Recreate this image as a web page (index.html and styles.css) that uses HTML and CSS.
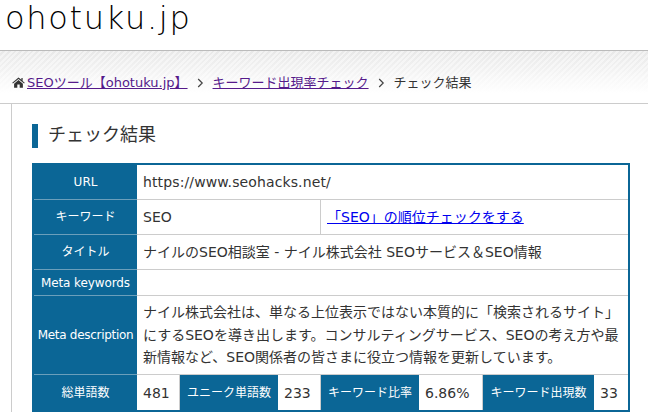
FILE: index.html
```html
<!DOCTYPE html>
<html lang="ja">
<head>
<meta charset="utf-8">
<title>チェック結果</title>
<link rel="stylesheet" href="styles.css">
</head>
<body>
<header class="site-header"><div class="logo">ohotuku.jp</div></header>
<nav class="crumbs">
  <svg class="home" viewBox="0 0 14 12" width="13" height="11"><path d="M7 0.6 0.2 6.2l.7.9L7 2.2l6.1 4.9.7-.9-2.3-1.9V1.2H10.2v1.9zM2.2 7.3V11.6H5.7V8.2H8.3V11.6H11.8V7.3L7 3.4z" fill="#333"/></svg>
  <a href="#" class="crumb-link">SEOツール【ohotuku.jp】</a>
  <svg class="sep" viewBox="0 0 7 10" width="7" height="10"><path d="M1.2 1 5.2 5 1.2 9" fill="none" stroke="#444" stroke-width="1.2"/></svg>
  <a href="#" class="crumb-link">キーワード出現率チェック</a>
  <svg class="sep" viewBox="0 0 7 10" width="7" height="10"><path d="M1.2 1 5.2 5 1.2 9" fill="none" stroke="#444" stroke-width="1.2"/></svg>
  <span>チェック結果</span>
</nav>
<main class="card">
  <h1 class="title">チェック結果</h1>
  <table class="result">
    <colgroup>
      <col class="c1"><col class="c2"><col class="c3"><col class="c4"><col class="c5"><col class="c6"><col class="c7"><col class="c8">
    </colgroup>
    <tr class="r34"><th>URL</th><td colspan="7" class="url">https://www.seohacks.net/</td></tr>
    <tr class="r34"><th>キーワード</th><td colspan="3">SEO</td><td colspan="4"><a href="#" class="link">「SEO」の順位チェックをする</a></td></tr>
    <tr class="r34"><th>タイトル</th><td colspan="7">ナイルのSEO相談室 - ナイル株式会社 SEOサービス＆SEO情報</td></tr>
    <tr class="r25"><th class="tight1">Meta keywords</th><td colspan="7"></td></tr>
    <tr class="r78"><th class="tight2">Meta description</th><td colspan="7" class="desc">ナイル株式会社は、単なる上位表示ではない本質的に「検索されるサイト」にするSEOを導き出します。コンサルティングサービス、SEOの考え方や最新情報など、SEO関係者の皆さまに役立つ情報を更新しています。</td></tr>
    <tr class="r34"><th>総単語数</th><td>481</td><th>ユニーク単語数</th><td>233</td><th>キーワード比率</th><td>6.86%</td><th>キーワード出現数</th><td>33</td></tr>
  </table>
</main>
</body>
</html>
```
FILE: styles.css
```css
* { box-sizing: border-box; }
html, body { margin: 0; padding: 0; height: 100%; overflow: hidden; }
body {
  background: #fff;
  color: #333;
  font-family: "DejaVu Sans", "Noto Sans CJK JP", sans-serif;
  font-size: 14px;
}
.site-header { height: 50px; padding-left: 5px; }
.logo {
  font-family: "DejaVu Sans", sans-serif;
  font-weight: 200;
  font-size: 32px;
  line-height: 37px;
  letter-spacing: 1.7px;
  color: #000;
}
.crumbs {
  height: 54px;
  border-top: 1px solid #bbb;
  border-bottom: 1px solid #ccc;
  padding: 11px 0 0 12px;
  display: flex;
  align-items: center;
  font-size: 13px;
  line-height: 20px;
  background:
    repeating-linear-gradient(135deg, rgba(255,255,255,.45) 0 2px, rgba(255,255,255,0) 2px 4px),
    linear-gradient(#e8e8e8, #fff 80%);
}
.home { margin-right: 2px; flex: none; }
.crumb-link { color: #551a8b; text-decoration: underline; }
.sep { margin: 0 9px; flex: none; }
.card {
  margin-left: 11px;
  border-left: 1px solid #ccc;
  padding: 20px 18px 0 20px;
}
.title {
  margin: 0 0 15px;
  height: 24px;
  border-left: 6px solid #0b6696;
  padding-left: 10px;
  font-size: 18px;
  font-weight: 400;
  line-height: 22px;
  color: #333;
}
.result {
  width: 598px;
  table-layout: fixed;
  border-collapse: separate;
  border-spacing: 0;
  border: 2px solid #0b6696;
}
.c1 { width: 103px; } .c2 { width: 43px; } .c3 { width: 98px; } .c4 { width: 43px; }
.c5 { width: 98px; } .c6 { width: 64px; } .c7 { width: 111px; } .c8 { width: 34px; }
.result th, .result td { padding: 0; line-height: 24px; }
.result th {
  background: #0b6696;
  color: #fff;
  font-weight: 400;
  font-size: 12px;
  text-align: center;
  border-bottom: 1px solid #6b9fbb;
  white-space: nowrap;
}
.result td {
  background: #fff;
  padding: 0 6px;
  border-bottom: 1px solid #ccc;
  border-right: 1px solid #ccc;
  white-space: nowrap;
}
.result td:last-child { border-right: 0; }
.result td.url { letter-spacing: .12px; }
.result td.desc { white-space: normal; padding: 0 6px; line-height: 22.4px; }
.result th.tight1 { letter-spacing: -.1px; }
.result th.tight2 { letter-spacing: -.3px; }
.result tr:last-child th, .result tr:last-child td { border-bottom: 0; }
.r34 { height: 35px; }
.r25 { height: 26px; }
.r78 { height: 79px; }
.link { color: #0000ee; text-decoration: underline; }
```
